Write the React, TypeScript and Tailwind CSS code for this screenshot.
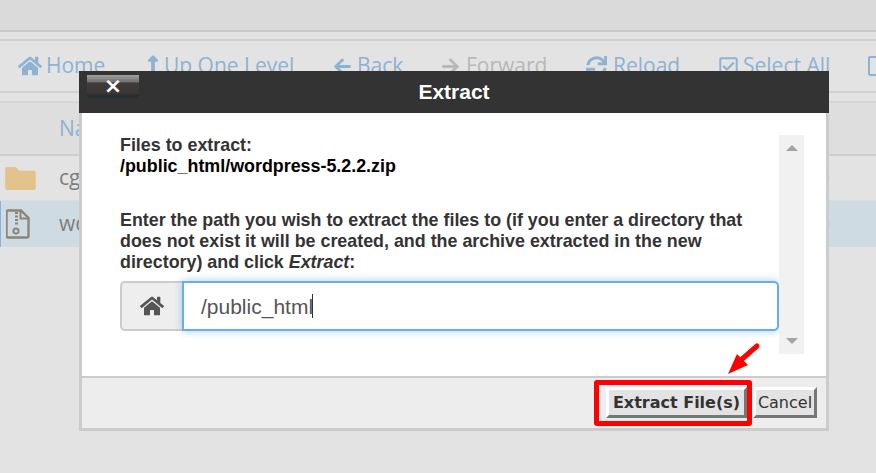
import React from "react";
import { FaHome, FaLongArrowAltUp, FaArrowLeft, FaArrowRight, FaSync, FaRegCheckSquare } from "react-icons/fa";

// Toolbar behind the dialog
const tools = [
  { label: "Home", icon: <FaHome className="w-[24px] h-[24px]" />, w: "w-[129px]", gap: "gap-[4px]" },
  { label: "Up One Level", icon: <FaLongArrowAltUp className="w-[12px] h-[24px]" />, w: "w-[186px]", gap: "gap-[5px]" },
  { label: "Back", icon: <FaArrowLeft className="w-[19px] h-[19px]" />, w: "w-[108px]", gap: "gap-[5px]" },
  { label: "Forward", icon: <FaArrowRight className="w-[19px] h-[19px]" />, muted: true, w: "w-[145px]", gap: "gap-[6px]" },
  { label: "Reload", icon: <FaSync className="w-[21px] h-[21px]" />, w: "w-[132px]", gap: "gap-[6px]" },
  { label: "Select All", icon: <FaRegCheckSquare className="w-[21px] h-[21px]" />, w: "w-[150px]", gap: "gap-[4px]" },
];

function FolderIcon() {
  return (
    <svg width="31" height="23" viewBox="0 0 32 24" className="shrink-0">
      <path d="M2 0h9l4 4h15a2 2 0 0 1 2 2v16a2 2 0 0 1-2 2H2a2 2 0 0 1-2-2V2a2 2 0 0 1 2-2z" fill="#e3c38c" />
    </svg>
  );
}

function ZipIcon() {
  return (
    <svg width="24" height="30" viewBox="0 0 24 30" className="shrink-0">
      <path d="M2 1.5h13l7.5 7.5v18a1.5 1.5 0 0 1-1.5 1.5H2A1.5 1.5 0 0 1 .5 27V3A1.5 1.5 0 0 1 2 1.5z" fill="none" stroke="#8d8577" strokeWidth="2.4" />
      <path d="M14.5 2v7.5H22" fill="none" stroke="#8d8577" strokeWidth="2" />
      <path d="M9 4h3M9 7.5h3M9 11h3M9 14.5h3" stroke="#8d8577" strokeWidth="1.8" />
      <circle cx="10" cy="22" r="2.6" fill="none" stroke="#8d8577" strokeWidth="2" />
    </svg>
  );
}

function App() {
  return (
    <div className="relative w-[876px] h-[473px] overflow-hidden bg-[#e3e3e3] font-['Open_Sans',sans-serif]">
      <div className="h-[30px] bg-[#dadada]" />
      <div className="h-[2px] bg-[#c6cacd]" />
      <div className="h-[7px]" />
      <div className="h-[2px] bg-[#cdcfd1]" />

      <div className="h-[50px] flex items-center pl-[18px] text-[21px] text-[#8eb2d1] whitespace-nowrap">
        {tools.map((t) => (
          <div key={t.label} className={`flex items-center shrink-0 ${t.gap} ${t.w} ${t.muted ? "text-[#b6b8ba]" : ""}`}>
            {t.icon}
            <span>{t.label}</span>
          </div>
        ))}
        <div className="w-[16px] h-[20px] rounded-[2px] border-2 border-[#8eb2d1] shrink-0" />
      </div>

      <div className="h-[2px] bg-[#cfd1d2]" />
      <div className="h-[8px]" />
      <div className="h-[2px] bg-[#d6d6d6]" />
      <div className="h-[51px] bg-[#dedede] flex items-center pl-[59px] text-[21px] text-[#8eb2d1]">Name</div>
      <div className="h-[2px] bg-[#cfcfcf]" />

      <div className="h-[45px] flex items-center pl-[5px] pr-[46px] gap-[23px] text-[21px] text-[#7d7d7d] border-b border-[#dcdcdc]">
        <FolderIcon />
        <span>cgi-bin</span>
        <div className="ml-auto w-[18px] h-[18px] rounded-full border-2 border-[#d0dde8]" />
      </div>
      <div className="h-[46px] flex items-center pl-[5px] pr-[46px] gap-[29px] text-[21px] text-[#7d7d7d] bg-[#cfdbe3] border-l border-[#8eb2d1]">
        <ZipIcon />
        <span>wordpress-5.2.2.zip</span>
        <div className="ml-auto w-[18px] h-[18px] rounded-full border-2 border-[#bcd3e6]" />
      </div>

      {/* dialog */}
      <div className="absolute left-[79px] top-[71px] w-[750px] h-[360px] flex flex-col font-['Liberation_Sans',sans-serif]">
        <div className="relative h-[42px] shrink-0 bg-[#333333] flex items-center justify-center text-[21px] font-bold text-white">
          <div className="absolute left-[8px] top-[4px] w-[52px] h-[23px] rounded-b-[4px] bg-[linear-gradient(#a0a0a0_0%,#757373_32%,#3f3b3a_38%,#3c3837_85%,#2a2a2a_100%)] border-b-2 border-[#243033] flex items-center justify-center font-['DejaVu_Sans',sans-serif] text-[22px] leading-none">
            ×
          </div>
          Extract
        </div>

        <div className="flex-1 min-h-0 flex flex-col border-x-[3px] border-b-[3px] border-[#cccccc]">
          <div className="h-[263px] shrink-0 bg-white flex pl-[38px] pt-[22px] text-[17.87px] leading-[21px] font-bold text-[#333333]">
            <div className="w-[659px]">
              <div>Files to extract:</div>
              <div className="text-black">/public_html/wordpress-5.2.2.zip</div>
              <div className="mt-[33px]">
                Enter the path you wish to extract the files to (if you enter a directory that does not exist it will be created, and the archive extracted in the new directory) and click <em>Extract</em>:
              </div>
              <div className="mt-[8px] flex h-[50px] font-normal">
                <div className="w-[62px] shrink-0 flex items-center justify-center bg-[#eeeeee] border-2 border-r-0 border-[#cccccc] rounded-l-[5px]">
                  <FaHome className="w-[24px] h-[24px] text-[#555555]" />
                </div>
                <div className="flex-1 flex items-center pl-[17px] bg-white border-2 border-[#66afe9] rounded-r-[5px] shadow-[0_0_8px_rgba(102,175,233,0.6)] text-[21px] text-[#555555]">
                  /public_html
                  <span className="w-px h-[24px] bg-[#333333] -ml-px" />
                </div>
              </div>
            </div>
            <div className="w-[25px] h-[219px] bg-[#f1f1f1] flex flex-col items-center justify-between py-[10px]">
              <div className="w-0 h-0 border-x-[6px] border-x-transparent border-b-[6px] border-b-[#a3a3a3]" />
              <div className="w-0 h-0 border-x-[6px] border-x-transparent border-t-[6px] border-t-[#a3a3a3]" />
            </div>
          </div>

          <div className="flex-1 bg-[#ededed] border-t-[2px] border-[#cccccc] flex items-start justify-end pt-[9px] pr-[9px] font-['DejaVu_Sans',sans-serif] text-[#333333]">
            <button className="w-[141px] h-[31px] bg-[#e3e3e3] border-[3px] border-t-white border-l-white border-r-[#767676] border-b-[#767676] text-[16px] font-bold">
              Extract File(s)
            </button>
            <button className="ml-[6px] w-[64px] h-[31px] bg-[#e3e3e3] border-[3px] border-t-white border-l-white border-r-[#767676] border-b-[#767676] text-[16px]">
              Cancel
            </button>
          </div>
        </div>
      </div>

      {/* annotation */}
      <div className="absolute left-[594px] top-[380px] w-[158px] h-[46px] border-[5px] border-[#ff0000] rounded-[3px]" />
      <svg className="absolute left-[725px] top-[342px]" width="36" height="34" viewBox="0 0 36 34">
        <path d="M32 4 L16 18" stroke="#ff0000" strokeWidth="5" strokeLinecap="round" />
        <path d="M3 32 L12 12 L23 23 Z" fill="#ff0000" />
      </svg>
    </div>
  );
}

export default App;
